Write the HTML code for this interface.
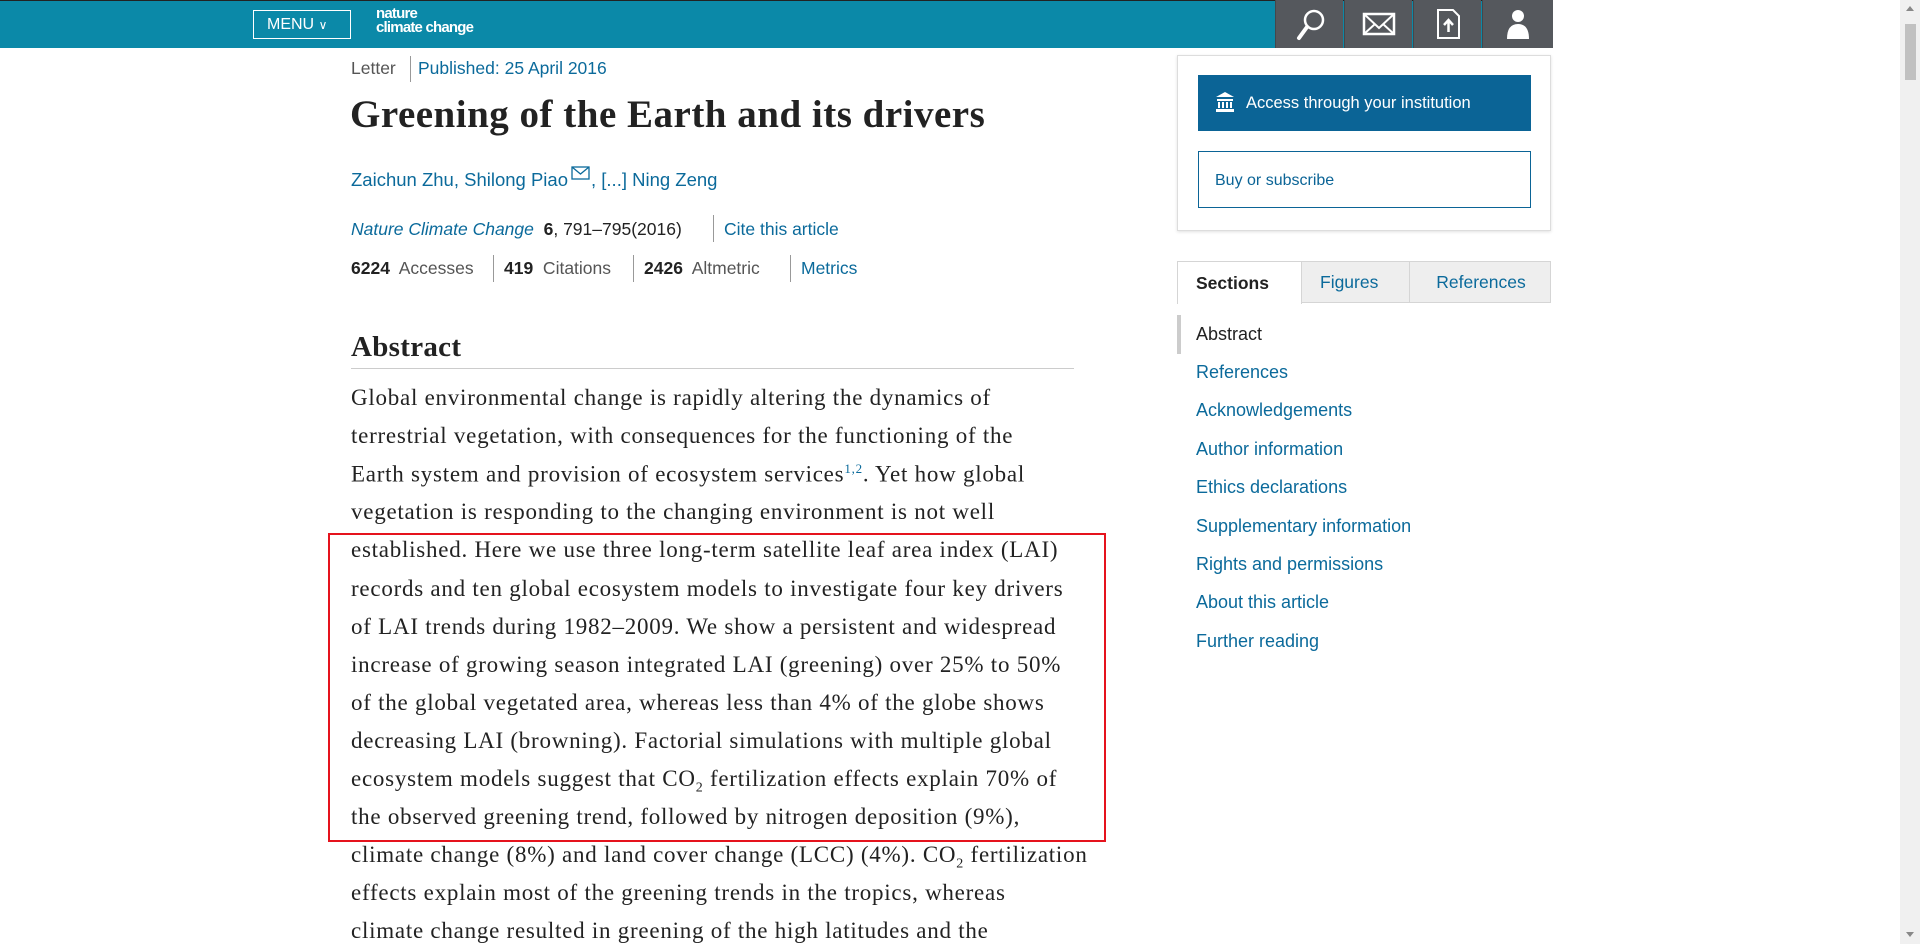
<!DOCTYPE html>
<html><head><meta charset="utf-8"><style>
*{margin:0;padding:0;box-sizing:border-box}
body{width:1920px;height:944px;overflow:hidden;background:#fff;font-family:"Liberation Sans",sans-serif;position:relative}
.a{position:absolute;white-space:nowrap}
.hdr{position:absolute;left:0;top:0;width:1553px;height:48px;background:#0b89a8;border-top:1px solid #222}
.ib{position:absolute;top:0;width:68px;height:48px;background:#55585d;border-left:1px solid #44474b}
.blue{color:#0b6a9b}
.body p{position:absolute;left:351px;font-family:"Liberation Serif",serif;font-size:23px;letter-spacing:0.75px;color:#222;white-space:nowrap}
.sec{position:absolute;left:1196px;font-size:18px;color:#0b6a9b;white-space:nowrap}
</style></head><body>
<div class="hdr">
 <div class="a" style="left:253px;top:9px;width:98px;height:29px;border:1px solid #fff;color:#fff;font-size:16px;line-height:27px;padding-left:13px">MENU <span style="font-size:12px">&#8744;</span></div>
 <div class="a" style="left:376px;top:6px;color:#fff;font-size:15px;line-height:14px;letter-spacing:-0.8px;font-weight:bold">nature<br>climate change</div>
</div>
<div class="ib" style="left:1275px"><svg width="68" height="48"><circle cx="38" cy="20" r="9" fill="none" stroke="#fff" stroke-width="2.5"/><line x1="31" y1="27" x2="23" y2="38" stroke="#fff" stroke-width="4" stroke-linecap="round"/></svg></div>
<div class="ib" style="left:1344px"><svg width="68" height="48"><rect x="19" y="14" width="30" height="20" fill="none" stroke="#fff" stroke-width="2.5"/><path d="M19 14 L34 28 L49 14 M19 34 L30 24 M49 34 L38 24" fill="none" stroke="#fff" stroke-width="2"/></svg></div>
<div class="ib" style="left:1413px"><svg width="68" height="48"><path d="M24 10 H39 L45 16 V38 H24 Z" fill="none" stroke="#fff" stroke-width="2"/><path d="M34.5 32 V21 M30 25 L34.5 20 L39 25" fill="none" stroke="#fff" stroke-width="2.5"/></svg></div>
<div class="ib" style="left:1482px;width:71px"><svg width="71" height="48"><circle cx="35" cy="16" r="6" fill="#fff"/><path d="M24 39 Q24 24 35 24 Q46 24 46 39 Z" fill="#fff"/></svg></div>

<div class="a" style="left:351px;top:58px;font-size:17.5px;color:#555">Letter</div>
<div class="a" style="left:410px;top:56px;width:1px;height:26px;background:#999"></div>
<div class="a blue" style="left:418px;top:58px;font-size:17.5px">Published: 25 April 2016</div>
<div class="a" style="left:350px;top:92px;font-family:'Liberation Serif',serif;font-weight:bold;font-size:39px;color:#222;letter-spacing:0.5px">Greening of the Earth and its drivers</div>
<div class="a blue" style="left:351px;top:166px;font-size:18.5px">Zaichun Zhu, Shilong Piao<svg width="20" height="16" style="vertical-align:4px;margin-left:3px"><rect x="1" y="1" width="17" height="12" fill="none" stroke="#0b6a9b" stroke-width="1.3"/><path d="M1 1 L9.5 8 L18 1" fill="none" stroke="#0b6a9b" stroke-width="1.3"/></svg>, [...] Ning Zeng</div>
<div class="a" style="left:351px;top:219px;font-size:17.5px;color:#222"><i class="blue">Nature Climate Change</i>&nbsp; <b>6</b>, 791–795(2016)</div>
<div class="a" style="left:713px;top:215px;width:1px;height:27px;background:#999"></div>
<div class="a blue" style="left:724px;top:219px;font-size:17.5px">Cite this article</div>
<div class="a" style="left:351px;top:258px;font-size:17.5px;color:#555"><b style="color:#222">6224</b>&nbsp; Accesses</div>
<div class="a" style="left:493px;top:255px;width:1px;height:27px;background:#999"></div>
<div class="a" style="left:504px;top:258px;font-size:17.5px;color:#555"><b style="color:#222">419</b>&nbsp; Citations</div>
<div class="a" style="left:633px;top:255px;width:1px;height:27px;background:#999"></div>
<div class="a" style="left:644px;top:258px;font-size:17.5px;color:#555"><b style="color:#222">2426</b>&nbsp; Altmetric</div>
<div class="a" style="left:790px;top:255px;width:1px;height:27px;background:#999"></div>
<div class="a blue" style="left:801px;top:258px;font-size:17.5px">Metrics</div>

<div class="a" style="left:351px;top:331px;font-family:'Liberation Serif',serif;font-weight:bold;font-size:29px;color:#222;letter-spacing:0.3px">Abstract</div>
<div class="a" style="left:351px;top:368px;width:723px;height:1px;background:#ccc"></div>
<div class="body">
<p style="top:385px">Global environmental change is rapidly altering the dynamics of</p>
<p style="top:423px">terrestrial vegetation, with consequences for the functioning of the</p>
<p style="top:461px">Earth system and provision of ecosystem services<sup style="font-size:13px;color:#0b6a9b">1,2</sup>. Yet how global</p>
<p style="top:499px">vegetation is responding to the changing environment is not well</p>
<p style="top:537px">established. Here we use three long-term satellite leaf area index (LAI)</p>
<p style="top:576px">records and ten global ecosystem models to investigate four key drivers</p>
<p style="top:614px">of LAI trends during 1982–2009. We show a persistent and widespread</p>
<p style="top:652px">increase of growing season integrated LAI (greening) over 25% to 50%</p>
<p style="top:690px">of the global vegetated area, whereas less than 4% of the globe shows</p>
<p style="top:728px">decreasing LAI (browning). Factorial simulations with multiple global</p>
<p style="top:766px">ecosystem models suggest that CO<sub style="font-size:14px">2</sub> fertilization effects explain 70% of</p>
<p style="top:804px">the observed greening trend, followed by nitrogen deposition (9%),</p>
<p style="top:842px">climate change (8%) and land cover change (LCC) (4%). CO<sub style="font-size:14px">2</sub> fertilization</p>
<p style="top:880px">effects explain most of the greening trends in the tropics, whereas</p>
<p style="top:918px">climate change resulted in greening of the high latitudes and the</p>
</div>
<div class="a" style="left:328px;top:533px;width:778px;height:309px;border:2px solid #e5131d"></div>

<div class="a" style="left:1177px;top:55px;width:374px;height:176px;border:1px solid #ddd;box-shadow:0 1px 3px rgba(0,0,0,.12)"></div>
<div class="a" style="left:1198px;top:75px;width:333px;height:56px;background:#0b6496;color:#fff;font-size:16.5px;line-height:56px;padding-left:48px"><svg width="22" height="22" style="position:absolute;left:16px;top:16px"><path d="M11 1 L20 6 H2 Z" fill="#fff"/><rect x="3" y="8" width="16" height="2" fill="#fff"/><rect x="4" y="11" width="2" height="6" fill="#fff"/><rect x="8" y="11" width="2" height="6" fill="#fff"/><rect x="12" y="11" width="2" height="6" fill="#fff"/><rect x="16" y="11" width="2" height="6" fill="#fff"/><rect x="2" y="18" width="18" height="3" fill="#fff"/></svg>Access through your institution</div>
<div class="a" style="left:1198px;top:151px;width:333px;height:57px;border:1px solid #0b6496;color:#0b6496;font-size:16px;line-height:57px;padding-left:16px">Buy or subscribe</div>

<div class="a" style="left:1177px;top:261px;width:374px;height:42px;border:1px solid #d5d5d5;background:#eee"></div>
<div class="a" style="left:1177px;top:261px;width:125px;height:43px;background:#fff;border:1px solid #d5d5d5;border-bottom:none;font-size:17.5px;font-weight:bold;color:#222;line-height:42px;padding-left:18px">Sections</div>
<div class="a blue" style="left:1320px;top:261px;font-size:17.5px;line-height:42px">Figures</div>
<div class="a" style="left:1409px;top:261px;width:1px;height:42px;background:#d5d5d5"></div>
<div class="a blue" style="left:1411px;top:261px;width:140px;text-align:center;font-size:17.5px;line-height:42px">References</div>

<div class="a" style="left:1177px;top:315px;width:4px;height:39px;background:#ccc"></div>
<div class="sec" style="top:324px;color:#222">Abstract</div>
<div class="sec" style="top:362px">References</div>
<div class="sec" style="top:400px">Acknowledgements</div>
<div class="sec" style="top:439px">Author information</div>
<div class="sec" style="top:477px">Ethics declarations</div>
<div class="sec" style="top:516px">Supplementary information</div>
<div class="sec" style="top:554px">Rights and permissions</div>
<div class="sec" style="top:592px">About this article</div>
<div class="sec" style="top:631px">Further reading</div>

<div class="a" style="left:1900px;top:0;width:20px;height:944px;background:#f0f0f0"></div>
<div class="a" style="left:1905px;top:24px;width:11px;height:56px;background:#c1c1c1"></div>
<div class="a" style="left:1906px;top:6px;width:0;height:0;border-left:4px solid transparent;border-right:4px solid transparent;border-bottom:5px solid #888"></div>
<div class="a" style="left:1906px;top:932px;width:0;height:0;border-left:4px solid transparent;border-right:4px solid transparent;border-top:5px solid #888"></div>
</body></html>
